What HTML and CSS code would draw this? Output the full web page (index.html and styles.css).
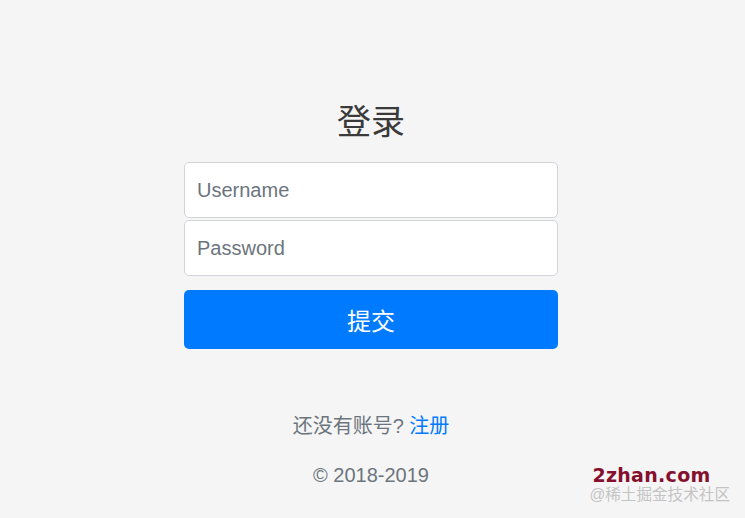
FILE: index.html
```html
<!DOCTYPE html>
<html lang="zh">
<head>
<meta charset="utf-8">
<title>登录</title>
<link rel="stylesheet" href="styles.css">
</head>
<body>
<main class="signin">
  <h1 class="title">登录</h1>
  <form class="form">
    <input class="field" type="text" placeholder="Username">
    <input class="field field-pass" type="password" placeholder="Password">
    <button class="submit" type="button">提交</button>
  </form>
  <p class="hint">还没有账号? <a class="link" href="#">注册</a></p>
  <p class="copy">© 2018-2019</p>
</main>
<div class="watermark">
  <div class="wm-brand">2zhan.com</div>
  <div class="wm-sub">@稀土掘金技术社区</div>
</div>
</body>
</html>
```
FILE: styles.css
```css
html, body {
  margin: 0;
  height: 100%;
}
body {
  box-sizing: border-box;
  padding-right: 3px;
  background: #f5f5f5;
  font-family: "Liberation Sans", Arial, "Noto Sans CJK SC", sans-serif;
  color: #212529;
  overflow: hidden;
}
.signin {
  width: 374px;
  margin: 0 auto;
  padding-top: 102px;
  text-align: center;
}
.title {
  margin: 0 0 20px;
  font-size: 34px;
  line-height: 40px;
  font-weight: 400;
  color: #3a3a3a;
}
.form {
  display: flex;
  flex-direction: column;
  margin: 0;
}
.field {
  box-sizing: border-box;
  height: 56px;
  width: 100%;
  margin: 0 0 2px;
  padding: 0 12px;
  border: 1px solid #d0d4d8;
  border-radius: 5px;
  background: #fff;
  font-family: inherit;
  font-size: 20px;
  color: #495057;
  outline: none;
}
.field::placeholder {
  color: #6c757d;
}
.field-pass {
  margin-bottom: 0;
}
.submit {
  margin-top: 14px;
  height: 59px;
  width: 100%;
  border: none;
  border-radius: 5px;
  background: #007bff;
  color: #fff;
  font-family: inherit;
  font-size: 24px;
  cursor: pointer;
}
.hint {
  margin: 62px 0 0;
  font-size: 20px;
  line-height: 30px;
  color: #6c757d;
}
.link {
  color: #007bff;
  text-decoration: none;
}
.copy {
  margin: 19px 0 0;
  font-size: 20px;
  line-height: 30px;
  color: #6c757d;
}
.watermark {
  position: absolute;
  right: 15px;
  bottom: 15px;
  text-align: left;
}
.wm-brand {
  font-family: "DejaVu Sans", sans-serif;
  font-weight: 700;
  font-size: 19px;
  letter-spacing: 0.3px;
  line-height: 16px;
  color: #85102e;
  padding-left: 3px;
}
.wm-sub {
  font-family: "Liberation Sans", "Noto Sans CJK SC", sans-serif;
  font-size: 15.6px;
  line-height: 16px;
  color: #c4c4c4;
  margin-top: 4px;
}
```
